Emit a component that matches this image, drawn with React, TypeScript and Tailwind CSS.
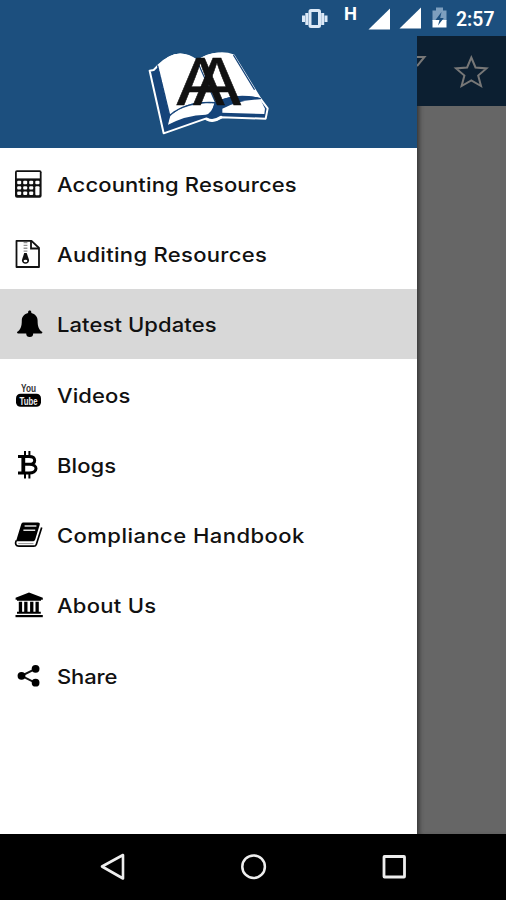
import type { ReactNode } from "react";

type MenuItem = {
  label: string;
  icon: ReactNode;
  textClass: string;
  active?: boolean;
};

function CalculatorIcon() {
  return (
    <svg className="h-[30px] w-[30px]" viewBox="0 0 30 30" fill="none">
      <rect x="1" y="1.2" width="26.600" height="27.500" rx="2" fill="#111" />
      <rect x="2.800" y="3" width="23" height="6.400" fill="#fff" />
      {[3.2, 9.2, 15.2].map((x) =>
        [11.8, 17.2, 22.6].map((y) => <rect key={`${x}-${y}`} x={x} y={y} width="4" height="3.400" rx="1" fill="#fff" />)
      )}
      <rect x="21.300" y="11.800" width="4.200" height="3.400" rx="1" fill="#fff" />
      <rect x="21.300" y="17.200" width="4.200" height="9" rx="1" fill="#fff" />
    </svg>
  );
}

function ZipFileIcon() {
  return (
    <svg className="h-[30px] w-[30px]" viewBox="0 0 30 30" fill="none" stroke="#111">
      <path d="M2.500 1.800H17.500L25 9V28H2.500Z" strokeWidth="1.800" strokeLinejoin="round" />
      <path d="M17 2V9.500H25" strokeWidth="1.800" />
      <path d="M11.500 3V14" strokeWidth="3.800" strokeDasharray="1.300 1.500" opacity="0.45" />
      <path d="M10.200 14H12.700l2.200 6.500c.7 2.500-1 4.300-3.400 4.300s-4.100-1.800-3.400-4.300Z" fill="#111" stroke="none" />
      <ellipse cx="11.500" cy="22" rx="1.900" ry="1.200" fill="#fff" stroke="none" />
    </svg>
  );
}

function BellIcon() {
  return (
    <svg className="h-[30px] w-[30px]" viewBox="0 -0.7 30 30">
      <path d="M15.700.8c.9 0 1.600.7 1.600 1.600v.8c3.800.8 6.300 3.700 6.300 7.500 0 6.300 1.300 9.300 4.800 11.500 0 1-.8 1.600-1.700 1.600h-7.500a3.500 3.500 0 0 1-7 0H4.700c-.9 0-1.700-.6-1.700-1.600 3.500-2.200 4.800-5.200 4.800-11.500 0-3.800 2.500-6.700 6.300-7.500v-.8c0-.9.7-1.600 1.600-1.600Z" />
    </svg>
  );
}

function YoutubeIcon() {
  return (
    <svg className="h-[30px] w-[30px]" viewBox="0 0 30 30" fontFamily="'Liberation Sans', Arial, sans-serif">
      <text x="7" y="12" fontSize="11.500" fontWeight="700" textLength="15" lengthAdjust="spacingAndGlyphs" fill="#333">
        You
      </text>
      <rect x="2" y="13.800" width="25" height="13" rx="4.500" />
      <text x="5.500" y="24.500" fontSize="11" fontWeight="700" textLength="18" lengthAdjust="spacingAndGlyphs" fill="#eee">
        Tube
      </text>
    </svg>
  );
}

function BitcoinIcon() {
  return (
    <svg className="h-[30px] w-[30px]" viewBox="0 -0.3 30 30" fill="none" stroke="#000">
      <path d="M11 .8V6M15.400 .8V6M11 23V28.200M15.400 23V28.200" strokeWidth="2" />
      <path d="M4 6.300H15C22.500 6.300 22.500 14 15.500 14H9.500M15.500 14C24.500 14 24 22.800 15 22.800H4" strokeWidth="3" />
      <path d="M9.300 6V23" strokeWidth="3.800" />
    </svg>
  );
}

function BookIcon() {
  return (
    <svg className="h-[30px] w-[30px]" viewBox="0 0 30 30" fill="none">
      <path d="M9 2.500H24c1.500 0 2 .8 1.700 2.200L21.300 19.200c-.4 1.400-1.300 2-2.700 2H2L7 5C7.400 3.600 8 2.500 9 2.500Z" fill="#000" />
      <path d="M10.600 6H22.400M9.400 10.200H21.200" stroke="#ddd" strokeWidth="1.600" />
      <path d="M2.200 20.500C.7 24 2 26.200 4.800 26.200H19.800c1.300 0 2.100-.6 2.500-1.800L27.700 7.500" stroke="#000" strokeWidth="1.700" />
      <path d="M4.300 23.600H19.500" stroke="#777" strokeWidth="0.8" />
    </svg>
  );
}

function UniversityIcon() {
  return (
    <svg className="h-[30px] w-[30px]" viewBox="0 -0.5 30 30">
      <path d="M15 2 28.800 7.300V9.200H27V10.300H3V9.200H1.600V7.300Z" />
      <path d="M4.800 11.300H8.100V21.300H10.200V11.300H13.500V21.300H16.100V11.300H19.400V21.300H21.500V11.300H24.800V21.300H26.800V23.200H3V21.300H4.800Z" />
      <path d="M1.500 24.500H28.800V26.700H1.500Z" />
    </svg>
  );
}

function ShareIcon() {
  return (
    <svg className="h-[30px] w-[30px]" viewBox="0 0 30 30">
      <path d="M21.500 7.800 7.500 14.800 21.500 21.800" fill="none" stroke="#111" strokeWidth="2" />
      <circle cx="21.600" cy="7.800" r="3.900" />
      <circle cx="7.500" cy="14.800" r="3.900" />
      <circle cx="21.600" cy="21.700" r="3.900" />
    </svg>
  );
}

const items: MenuItem[] = [
  { label: "Accounting Resources", icon: <CalculatorIcon />, textClass: "tracking-[0.12px]" },
  { label: "Auditing Resources", icon: <ZipFileIcon />, textClass: "tracking-[0.28px]" },
  { label: "Latest Updates", icon: <BellIcon />, textClass: "tracking-[0.08px]", active: true },
  { label: "Videos", icon: <YoutubeIcon />, textClass: "tracking-[0.1px]" },
  { label: "Blogs", icon: <BitcoinIcon />, textClass: "tracking-[0.1px]" },
  { label: "Compliance Handbook", icon: <BookIcon />, textClass: "tracking-[0.42px]" },
  { label: "About Us", icon: <UniversityIcon />, textClass: "tracking-[0.25px]" },
  { label: "Share", icon: <ShareIcon />, textClass: "tracking-[-0.1px]" }
];

function StatusBar() {
  return (
    <header className="flex h-9 shrink-0 justify-end bg-[#1c4f7e]">
      <svg className="h-9 w-[216px]" viewBox="0 0 216 36" fontFamily="Roboto, sans-serif" fill="#fff">
        <g fill="none" stroke="#dce9f7">
          <rect x="20" y="10.500" width="9.500" height="16" rx="1" strokeWidth="3" />
          <path d="M16.800 13V25M32.700 13V25" strokeWidth="3" />
          <path d="M13.500 15.500V22M36 15.500V22" strokeWidth="3" />
        </g>
        <text x="54" y="19.500" fontSize="17.500" fontWeight="700" textLength="13" lengthAdjust="spacingAndGlyphs">
          H
        </text>
        <path d="M78.500 29.500 100 8.500V29.500Z" />
        <path d="M109.500 28.500 131 7.500V28.500Z" />
        <path d="M142.500 10.500H146V7.500H153V10.500H156.500V21H142.500Z" fill="#7e9fbe" />
        <path d="M142.500 20H156.500V27.500H142.500Z" />
        <path d="M151.500 12 145.500 20H149.500L148 25.500 153.800 18H150.200Z" fill="#1c4f7e" />
        <text x="166" y="26" fontSize="20.500" fontWeight="600" textLength="38.500" lengthAdjust="spacingAndGlyphs">
          2:57
        </text>
      </svg>
    </header>
  );
}

function BookLogo() {
  return (
    <svg className="h-[100px] w-[140px]" viewBox="0 0 420 300">
      <g strokeLinejoin="round" strokeLinecap="round">
        <path d="M32 92 74 280 200 236Q222 248 246 232L380 236 386 205 364 176 284 46Q235 28 174 62Q115 18 56 78L44 90Z" fill="#16447a" stroke="#fff" strokeWidth="6" />
        <path d="M56 78Q115 12 174 62L230 186Q140 180 92 228Z" fill="#fff" />
        <path d="M174 62Q218 24 284 46L364 174Q285 155 230 188Z" fill="#fff" />
        <path d="M92 230Q140 182 226 190Q218 222 200 224Q140 225 84 256Z" fill="#fff" />
        <path d="M250 206Q300 180 364 178L378 206 376 222 250 218Z" fill="#fff" />
        <path d="M56 78 92 226 84 258M92 226Q140 184 230 188Q285 160 364 176" fill="none" stroke="#16447a" strokeWidth="4" strokeDasharray="14 3" />
        <path d="M174 62 230 188 218 220M284 46 346 148" fill="none" stroke="#16447a" strokeWidth="3.500" />
        <path d="M203 237Q222 248 246 232" fill="none" stroke="#fff" strokeWidth="9" />
      </g>
      <text
        x="0"
        y="0"
        transform="translate(107 196) scale(1.170 1)"
        fontFamily="Inter, sans-serif"
        fontSize="192"
        fontWeight="400"
        letterSpacing="-93"
        fill="#111"
        stroke="#111"
        strokeWidth="1.500"
      >
        AA
      </text>
    </svg>
  );
}

function NavBar() {
  return (
    <footer className="flex h-[66px] shrink-0 items-center justify-center gap-[111px] bg-black">
      <svg className="h-[30px] w-[30px]" viewBox="0 0 30 30" fill="none" stroke="#eee" strokeWidth="2.600" strokeLinejoin="round">
        <path d="M5 14.500 26 3V26.500Z" />
      </svg>
      <svg className="h-[30px] w-[30px]" viewBox="0 0 30 30" fill="none" stroke="#eee" strokeWidth="2.500">
        <circle cx="15.600" cy="14.700" r="11.300" />
      </svg>
      <svg className="h-[30px] w-[30px]" viewBox="0 0 30 30" fill="none" stroke="#eee" strokeWidth="2.800">
        <rect x="5" y="4.500" width="20.500" height="20.500" rx="0.500" />
      </svg>
    </footer>
  );
}

export default function App() {
  return (
    <div className="flex h-[900px] w-[506px] flex-col overflow-hidden bg-black">
      <StatusBar />
      <div className="flex min-h-0 flex-1">
        <aside className="flex w-[417px] shrink-0 flex-col bg-white">
          <div className="flex h-28 shrink-0 justify-center bg-[#1c4f7e] pt-1">
            <BookLogo />
          </div>
          <nav className="pt-[0.5px]">
            {items.map((item) => (
              <a key={item.label} className={`flex h-[70.3px] items-center pl-3.5 ${item.active ? "bg-[#d8d8d8]" : ""}`}>
                {item.icon}
                <span className={`ml-[13px] origin-left scale-x-110 whitespace-nowrap pt-[2px] font-[Inter,sans-serif] text-[20px] leading-7 font-medium text-[#111] ${item.textClass}`}>
                  {item.label}
                </span>
              </a>
            ))}
          </nav>
        </aside>
        <div className="flex flex-1 flex-col bg-[#666] shadow-[inset_5px_0_5px_-3px_#333]">
          <div className="flex h-[70px] items-center bg-[#0c1f31]">
            <svg className="h-[70px] w-[89px]" viewBox="0 0 89 70" fill="none" stroke="#777" strokeWidth="2">
              <path d="M0 21H7.500L0 30" />
              <path d="M54.300 21.500 58.500 31.500 69.500 32.400 61.200 39.600 64 50 54.300 44.500 44.600 50 47.400 39.600 39 32.400 50.100 31.500Z" />
            </svg>
          </div>
        </div>
      </div>
      <NavBar />
    </div>
  );
}
